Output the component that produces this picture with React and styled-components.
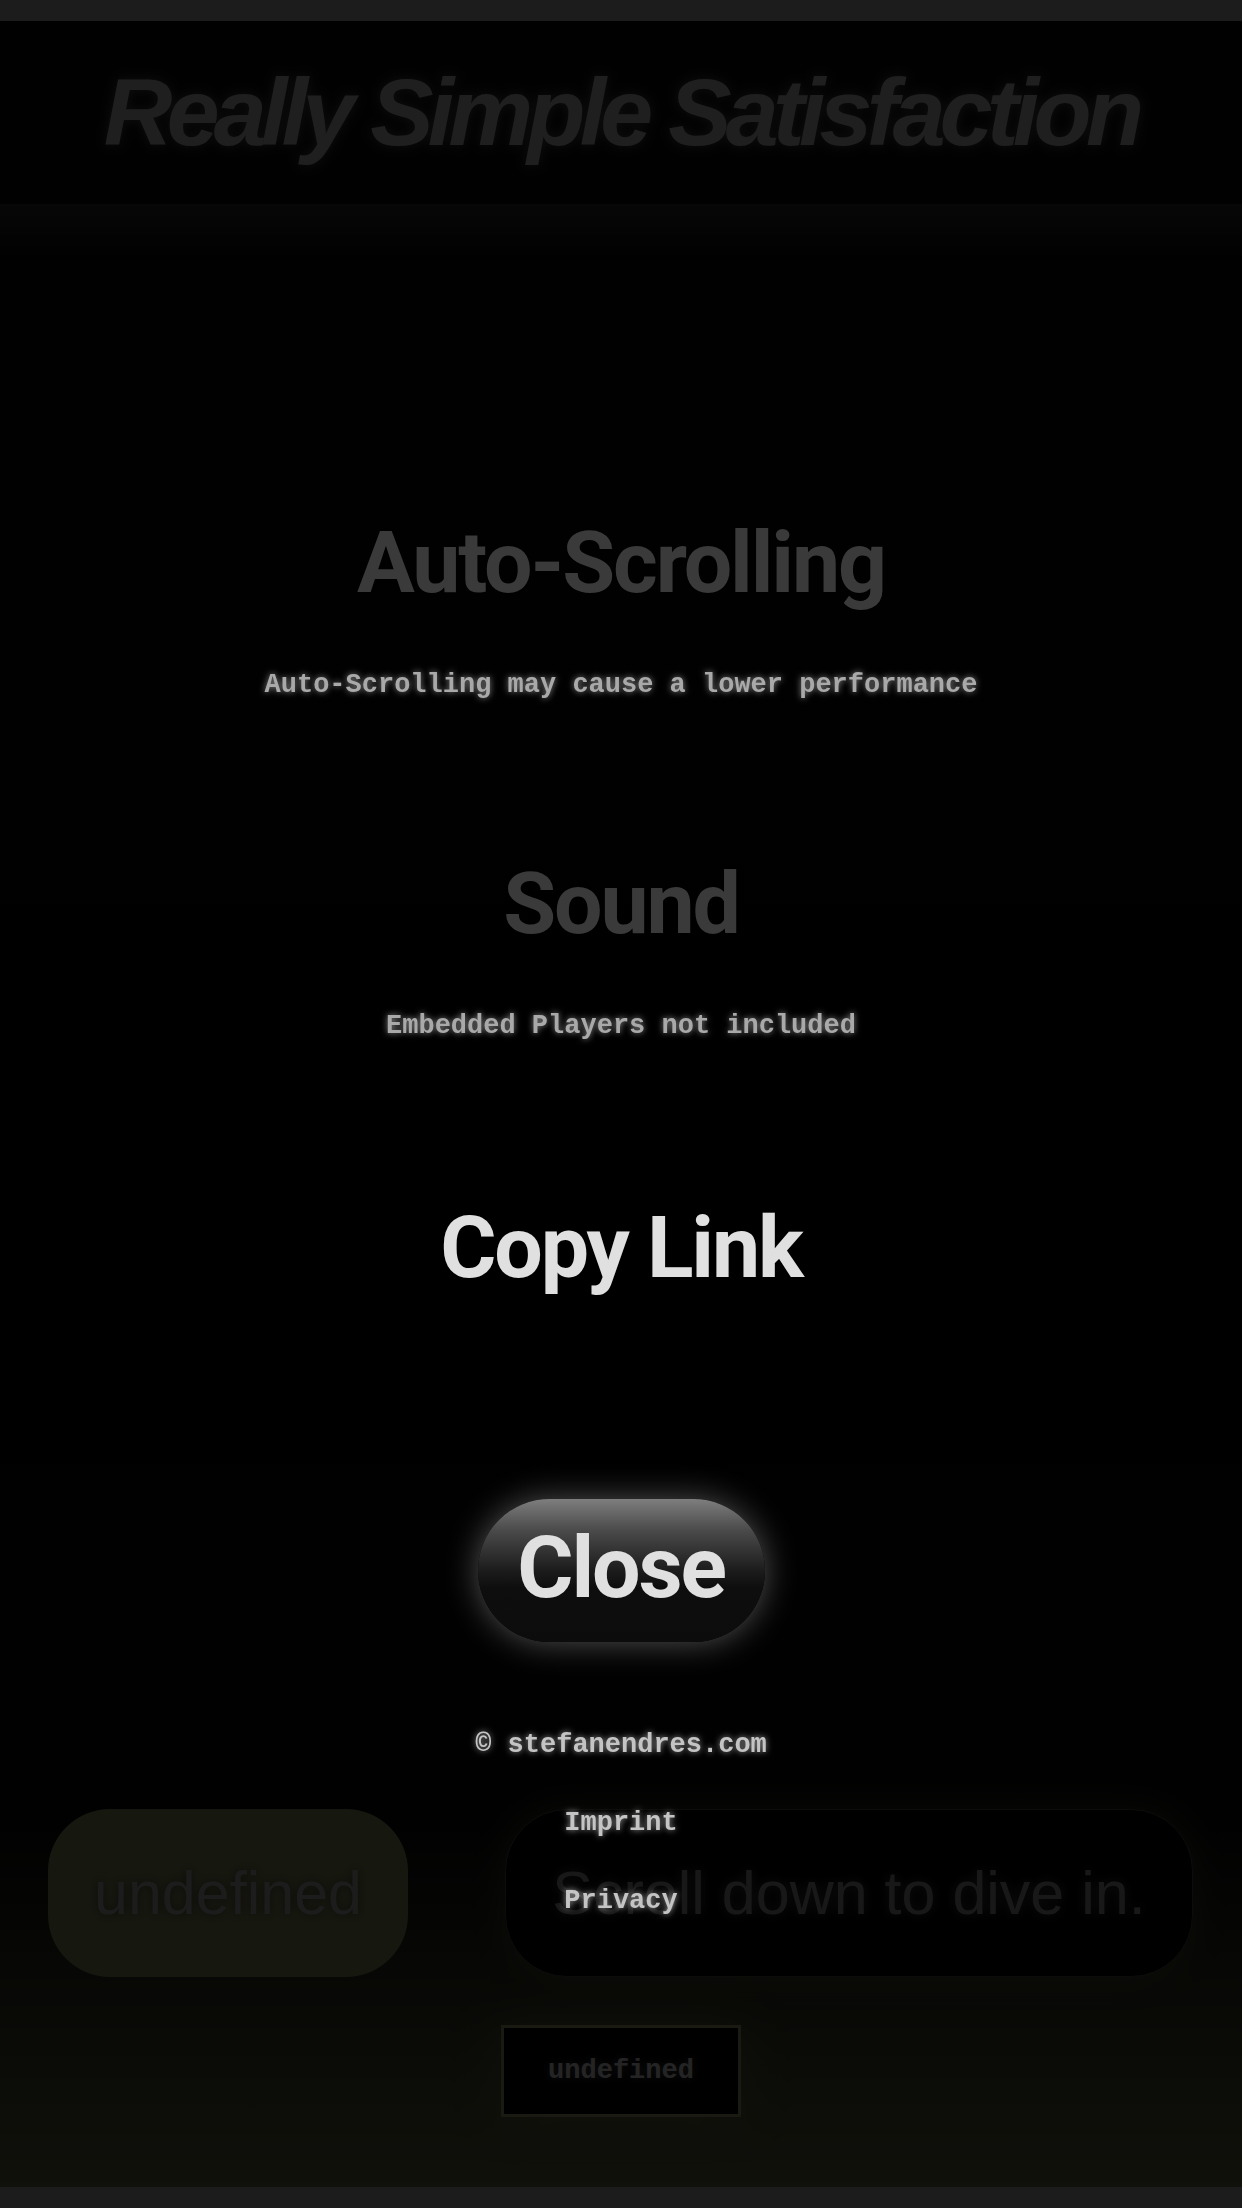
import React from "react";
import styled, { createGlobalStyle } from "styled-components";

const sans = `"Liberation Sans", Arial, Helvetica, sans-serif`;
const display = `Roboto, "Liberation Sans", Arial, sans-serif`;
const mono = `"Liberation Mono", "Courier New", monospace`;

const GlobalStyle = createGlobalStyle`
  html, body {
    margin: 0;
    padding: 0;
    background: #000;
  }
  * { box-sizing: border-box; }
`;

// page under the menu (dimmed by the overlay)
const Page = styled.div`
  display: flex;
  flex-direction: column;
  height: 2208px;
  background: #bbbbbb;
`;

const Bar = styled.div`
  height: 21px;
  flex-shrink: 0;
  background: #bbbbbb;
`;

const Header = styled.header`
  height: 183px;
  flex-shrink: 0;
  display: flex;
  align-items: center;
  justify-content: center;
  background: #0d0d0d;
`;

const Title = styled.h1`
  margin: 0;
  font-family: ${sans};
  font-size: 95px;
  font-weight: 700;
  font-style: italic;
  letter-spacing: -0.06em;
  line-height: 1;
  color: #cdcdcd;
  text-shadow: 0 0 12px rgba(255, 255, 255, 0.35);
`;

const Main = styled.main`
  flex: 1;
  display: flex;
  flex-direction: column;
  justify-content: flex-end;
  align-items: center;
  padding-bottom: 70px;
  background: linear-gradient(to bottom, #2f2f2f 0%, #080808 3%, #050505 60%, #0d0d0d 82%, #6b7149 100%);
`;

const Cards = styled.div`
  align-self: stretch;
  display: flex;
  gap: 97px;
  padding: 0 49px 0 48px;
  margin-bottom: 48px;
`;

const Card = styled.div`
  height: 168px;
  border-radius: 62px;
  display: flex;
  align-items: center;
  justify-content: center;
  font-family: ${sans};
  font-size: 61px;
  line-height: 1;
  white-space: nowrap;
  ${(p) =>
    p.$accent
      ? `
    width: 360px;
    flex-shrink: 0;
    background: #939964;
    color: #b8b8b8;
    text-shadow: 0 0 10px rgba(0, 0, 0, 0.5);
  `
      : `
    flex: 1;
    background: #000;
    border: 1px solid #50504a;
    color: #a4a4a4;
    text-shadow: 0 0 12px rgba(255, 255, 255, 0.4);
    box-shadow: 0 0 30px rgba(130, 135, 90, 0.45);
  `}
`;

const GhostButton = styled.div`
  width: 240px;
  height: 92px;
  display: flex;
  align-items: center;
  justify-content: center;
  border: 3px solid #adad78;
  background: #000;
  font-family: ${mono};
  font-weight: 700;
  font-size: 27px;
  color: #f2f2f2;
  text-shadow: 0 0 10px rgba(255, 255, 255, 0.4);
  box-shadow: 0 0 45px rgba(170, 175, 120, 0.35);
`;

// settings menu on top
const Overlay = styled.div`
  position: fixed;
  inset: 0;
  background: rgba(0, 0, 0, 0.85);
  display: flex;
  flex-direction: column;
  align-items: center;
  padding-top: 520px;
`;

const Option = styled.div`
  display: flex;
  flex-direction: column;
  align-items: center;
  gap: 66px;
  margin-bottom: ${(p) => p.$space}px;
`;

const OptionTitle = styled.div`
  font-family: ${display};
  font-weight: 700;
  font-size: 86px;
  letter-spacing: -0.025em;
  line-height: 86px;
  color: ${(p) => (p.$off ? "#3a3a3a" : "#e0e0e0")};
  cursor: pointer;
`;

const Note = styled.div`
  font-family: ${mono};
  font-weight: 700;
  font-size: 27px;
  line-height: 27px;
  color: #a9a9a9;
  white-space: nowrap;
  text-shadow: 0 0 6px rgba(255, 255, 255, 0.55);
`;

const CloseButton = styled.button`
  width: 287px;
  height: 143px;
  border: none;
  border-radius: 72px;
  padding: 0 0 6px;
  display: flex;
  align-items: center;
  justify-content: center;
  font-family: ${display};
  font-weight: 700;
  font-size: 86px;
  letter-spacing: -0.025em;
  color: #e0e0e0;
  background: linear-gradient(to bottom, #7e7e7e 0%, #4a4a4a 22%, #1c1c1c 50%, #0e0e0e 62%, #0c0c0c 100%);
  box-shadow: 0 0 32px rgba(255, 255, 255, 0.32);
  cursor: pointer;
`;

const Footer = styled.footer`
  margin-top: 90px;
  display: flex;
  flex-direction: column;
  align-items: center;
  gap: 51px;
`;

const FootText = styled.div`
  font-family: ${mono};
  font-weight: 700;
  font-size: 27px;
  line-height: 27px;
  color: #c4c4c4;
  text-shadow: 0 0 6px rgba(255, 255, 255, 0.6);
`;

export default function App() {
  return (
    <>
      <GlobalStyle />
      <Page>
        <Bar />
        <Header>
          <Title>Really Simple Satisfaction</Title>
        </Header>
        <Main>
          <Cards>
            <Card $accent>undefined</Card>
            <Card>Scroll down to dive in.</Card>
          </Cards>
          <GhostButton>undefined</GhostButton>
        </Main>
        <Bar />
      </Page>

      <Overlay>
        <Option $space={162}>
          <OptionTitle $off>Auto-Scrolling</OptionTitle>
          <Note>Auto-Scrolling may cause a lower performance</Note>
        </Option>
        <Option $space={165}>
          <OptionTitle $off>Sound</OptionTitle>
          <Note>Embedded Players not included</Note>
        </Option>
        <Option $space={208}>
          <OptionTitle>Copy Link</OptionTitle>
        </Option>
        <CloseButton>Close</CloseButton>
        <Footer>
          <FootText>© stefanendres.com</FootText>
          <FootText>Imprint</FootText>
          <FootText>Privacy</FootText>
        </Footer>
      </Overlay>
    </>
  );
}
